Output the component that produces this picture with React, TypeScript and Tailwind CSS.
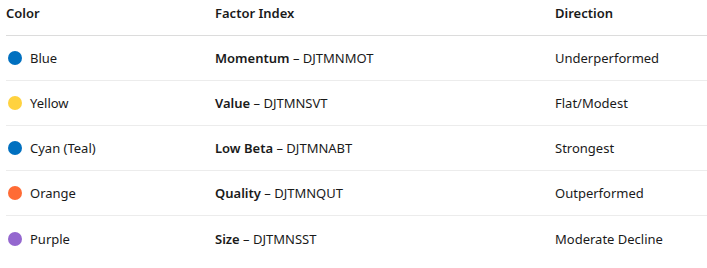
import React from "react";

const rows = [
  { color: "#0070c0", name: "Blue", factor: "Momentum", code: "DJTMNMOT", dir: "Underperformed" },
  { color: "#ffd23f", name: "Yellow", factor: "Value", code: "DJTMNSVT", dir: "Flat/Modest" },
  { color: "#0070c0", name: "Cyan (Teal)", factor: "Low Beta", code: "DJTMNABT", dir: "Strongest" },
  { color: "#ff6b35", name: "Orange", factor: "Quality", code: "DJTMNQUT", dir: "Outperformed" },
  { color: "#9467cf", name: "Purple", factor: "Size", code: "DJTMNSST", dir: "Moderate Decline" },
];

export default function App() {
  return (
    <div
      className="w-[707px] h-[268px] bg-white pl-[6px] text-[13px] text-[#1a1a1a]"
      style={{ fontFamily: '"Segoe UI", "Noto Sans", "Open Sans", sans-serif' }}
    >
      <div className="grid grid-cols-[209px_340px_1fr] border-b border-[#dcdcdc] pt-[3px] pb-[12px] leading-[20px] font-semibold text-[#1a1a1a]">
        <div>Color</div>
        <div>Factor Index</div>
        <div>Direction</div>
      </div>
      {rows.map((r, i) => (
        <div
          key={r.name}
          className={`grid grid-cols-[209px_340px_1fr] h-[45px] items-center leading-[20px] ${
            i < rows.length - 1 ? "border-b border-[#ececec]" : ""
          }`}
        >
          <div className="flex items-center gap-[8px] pl-[2px]">
            <span className="inline-block w-[14px] h-[14px] rounded-full" style={{ backgroundColor: r.color }} />
            <span>{r.name}</span>
          </div>
          <div>
            <span className="font-semibold">{r.factor}</span> – {r.code}
          </div>
          <div>{r.dir}</div>
        </div>
      ))}
    </div>
  );
}
